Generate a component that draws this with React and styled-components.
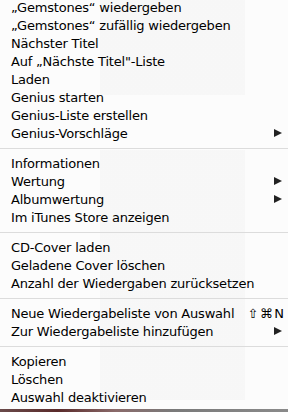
import React from "react";
import styled, { createGlobalStyle } from "styled-components";

const Global = createGlobalStyle`
  html, body { margin: 0; padding: 0; background: #ffffff; }
  body { width: 288px; height: 412px; overflow: hidden; }
`;

const Page = styled.div`
  width: 288px;
  height: 412px;
  display: flex;
  flex-direction: column;
  overflow: hidden;
  background: #ffffff;
`;

const Menu = styled.div`
  flex: 1;
  display: flex;
  flex-direction: column;
  margin-top: -2px;
  font-family: "DejaVu Sans", "Liberation Sans", sans-serif;
  font-size: 13px;
  color: #000;
  background:
    linear-gradient(rgba(238, 238, 238, 0.35), rgba(238, 238, 238, 0.35)) 100px 2px / 145px 95px no-repeat,
    linear-gradient(rgba(236, 236, 236, 0.3), rgba(236, 236, 236, 0.3)) 100px 152px / 145px 250px no-repeat,
    #fcfcfc;
`;

const Row = styled.div`
  height: 18px;
  display: flex;
  align-items: center;
  justify-content: space-between;
  padding: 0 4px 0 11px;
  white-space: nowrap;
`;

const Label = styled.span`
  letter-spacing: -0.2px;
`;

const Arrow = styled.span`
  width: 0;
  height: 0;
  border-top: 4.5px solid transparent;
  border-bottom: 4.5px solid transparent;
  border-left: 8px solid #222;
  margin-right: 2px;
`;

const Shortcut = styled.span`
  font-size: 13px;
  letter-spacing: 1.5px;
  margin-right: -1.5px;
  color: #000;
`;

const Separator = styled.div`
  height: 12px;
  display: flex;
  align-items: center;
  &::after {
    content: "";
    flex: 1;
    height: 1px;
    background: #dcdcdc;
  }
`;

const BottomStrip = styled.div`
  height: 3px;
  background: linear-gradient(90deg, #6a4a4a 0%, #5a2a2a 20%, #8a6a6a 40%, #7a7a7a 60%, #8a8a8a 100%);
`;

const groups = [
  [
    { t: "\u201EGemstones\u201C wiedergeben" },
    { t: "\u201EGemstones\u201C zufällig wiedergeben" },
    { t: "Nächster Titel" },
    { t: "Auf \u201ENächste Titel\"-Liste" },
    { t: "Laden" },
    { t: "Genius starten" },
    { t: "Genius-Liste erstellen" },
    { t: "Genius-Vorschläge", sub: true },
  ],
  [
    { t: "Informationen" },
    { t: "Wertung", sub: true },
    { t: "Albumwertung", sub: true },
    { t: "Im iTunes Store anzeigen" },
  ],
  [
    { t: "CD-Cover laden" },
    { t: "Geladene Cover löschen" },
    { t: "Anzahl der Wiedergaben zurücksetzen" },
  ],
  [
    { t: "Neue Wiedergabeliste von Auswahl", key: "\u21E7\u2318N" },
    { t: "Zur Wiedergabeliste hinzufügen", sub: true },
  ],
  [
    { t: "Kopieren" },
    { t: "Löschen" },
    { t: "Auswahl deaktivieren" },
  ],
];

export default function App() {
  return (
    <Page>
      <Global />
      <Menu>
        {groups.map((g, gi) => (
          <React.Fragment key={gi}>
            {gi > 0 && <Separator />}
            {g.map((item, i) => (
              <Row key={i}>
                <Label>{item.t}</Label>
                {item.sub && <Arrow />}
                {item.key && <Shortcut>{item.key}</Shortcut>}
              </Row>
            ))}
          </React.Fragment>
        ))}
      </Menu>
      <BottomStrip />
    </Page>
  );
}
